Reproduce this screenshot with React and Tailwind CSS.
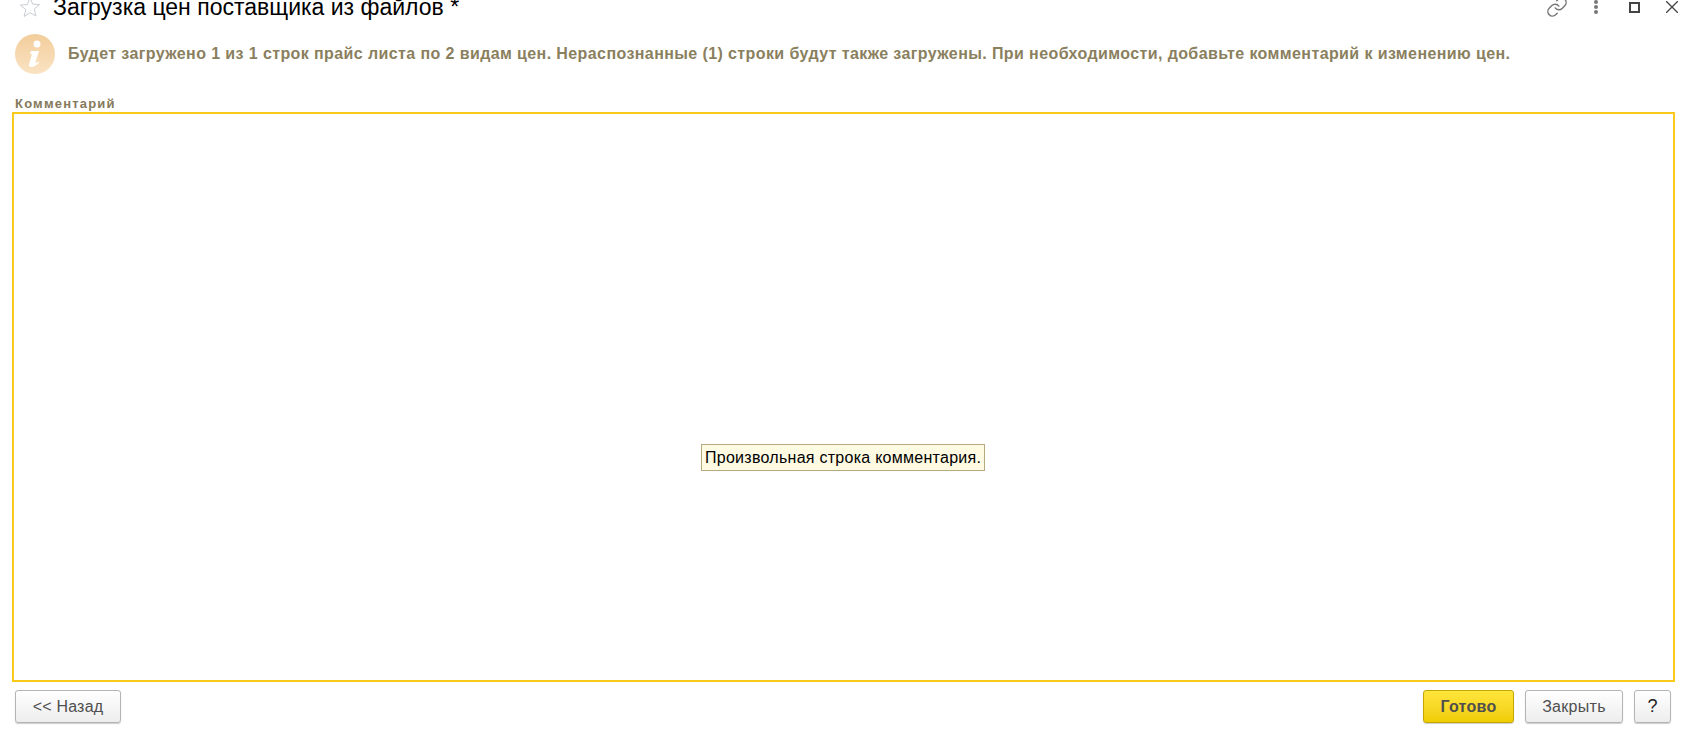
export default function App() {
  return (
    <div className="flex h-[732px] w-[1694px] flex-col overflow-hidden bg-white font-['Liberation_Sans',Arial,sans-serif]">
      <div className="flex h-[14px] items-center pl-[19px] pr-[16px]">
        <svg width="22" height="22" viewBox="0 0 22 22" className="shrink-0">
          <path d="M11 1.500l2.600 6.600 7 .5-5.400 4.500 1.700 6.900L11 16.700 5.100 20.500l1.700-6.900L1.400 9.100l7-.5z" fill="none" stroke="#c8cdd3" strokeWidth="1" />
        </svg>
        <div className="ml-[12px] whitespace-nowrap text-[23px] leading-[24px] text-black">Загрузка цен поставщика из файлов *</div>
        <div className="ml-auto flex items-center">
          <svg width="22" height="22" viewBox="0 0 24 24" fill="none" stroke="#777" strokeWidth="1.600" strokeLinecap="round" className="mr-[26px]">
            <path d="M10 13a5 5 0 0 0 7.540.540l3-3a5 5 0 0 0-7.070-7.070l-1.720 1.710" />
            <path d="M14 11a5 5 0 0 0-7.540-.540l-3 3a5 5 0 0 0 7.070 7.070l1.710-1.710" />
          </svg>
          <div className="mr-[31px] flex w-[4px] flex-col gap-[1px]">
            <div className="size-[4px] rounded-full bg-[#777]" />
            <div className="size-[4px] rounded-full bg-[#777]" />
            <div className="size-[4px] rounded-full bg-[#777]" />
          </div>
          <div className="mr-[26px] size-[11px] border-2 border-[#444]" />
          <svg width="12" height="12" viewBox="0 0 12 12" stroke="#444" strokeWidth="1.300">
            <path d="M0 0l12 12M12 0L0 12" />
          </svg>
        </div>
      </div>
      <div className="mt-[20px] flex h-[40px] items-center pl-[15px]">
        <div className="flex size-[40px] shrink-0 items-center justify-center rounded-full bg-gradient-to-b from-[#f3cd9b] to-[#fae3c3]">
          <svg width="14" height="28" viewBox="0 0 14 28" fill="#fff">
            <circle cx="9" cy="4" r="3.500" />
            <path d="M3 11h8L7.500 22c-.3 1 .5 1.300 1.500.5l1.500-1 .7 1C9 25 6 27 3 27c-2 0-2.500-1.500-2-3l3-10H2z" />
          </svg>
        </div>
        <div className="ml-[13px] whitespace-nowrap text-[16px] font-bold leading-[18px] tracking-[0.4px] text-[#8a7f5e]">
          Будет загружено 1 из 1 строк прайс листа по 2 видам цен. Нераспознанные (1) строки будут также загружены. При необходимости, добавьте комментарий к изменению цен.
        </div>
      </div>
      <div className="mt-[22px] pl-[15px] text-[13px] font-bold leading-[16px] tracking-[1.2px] text-[#85795c]">Комментарий</div>
      <div className="relative ml-[12px] h-[570px] w-[1663px] shrink-0 border-2 border-[#fbc91b] bg-white">
        <div className="absolute left-[687px] top-[330px] flex h-[27px] w-[284px] items-center whitespace-nowrap border border-[#b5aa80] bg-[#fffbe3] pl-[3px] text-[16px] tracking-[0.27px] text-black">
          Произвольная строка комментария.
        </div>
      </div>
      <div className="mt-[8px] flex items-start pl-[15px] pr-[23px] text-[16px]">
        <button className="flex h-[33px] w-[106px] items-center justify-center rounded-[3px] border border-[#b4b4b4] bg-gradient-to-b from-white to-[#ededed] tracking-[0.2px] text-[#4f4f4f] shadow-[0_1px_1px_#ccc]">&lt;&lt; Назад</button>
        <button className="ml-auto flex h-[33px] w-[91px] items-center justify-center rounded-[3px] border border-[#c4a800] bg-gradient-to-b from-[#ffe53a] to-[#f0cd00] font-bold tracking-[0.3px] text-[#4f4f4f] shadow-[0_1px_1px_#ccc]">Готово</button>
        <button className="ml-[11px] flex h-[33px] w-[98px] items-center justify-center rounded-[3px] border border-[#b4b4b4] bg-gradient-to-b from-white to-[#ededed] tracking-[0.3px] text-[#4f4f4f] shadow-[0_1px_1px_#ccc]">Закрыть</button>
        <button className="ml-[11px] flex h-[33px] w-[37px] items-center justify-center rounded-[3px] border border-[#b4b4b4] bg-gradient-to-b from-white to-[#ededed] text-[18px] text-[#222] shadow-[0_1px_1px_#ccc]">?</button>
      </div>
    </div>
  );
}
